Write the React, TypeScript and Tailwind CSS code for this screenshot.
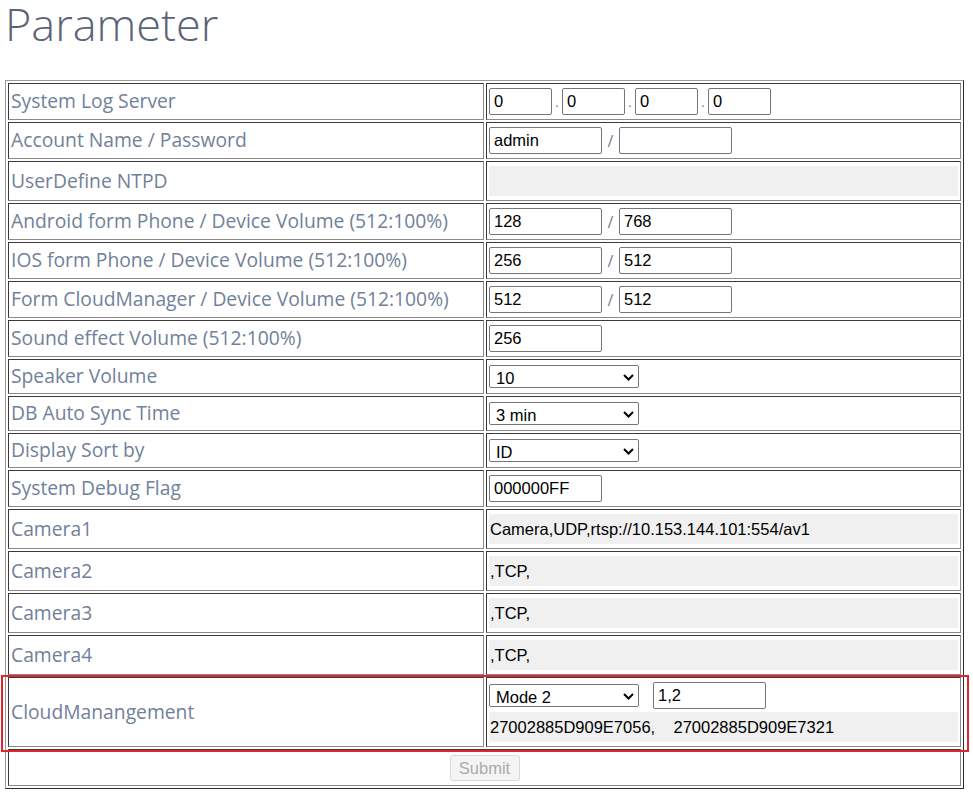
import { ChangeEvent } from "react";

const label = "font-['Open_Sans',sans-serif] text-[19.3px] text-[#71819a] align-middle p-[2px] border border-t-[#3a3a3a] border-l-[#3a3a3a] border-r-[#8a8a8a] border-b-[#8a8a8a]";
const value = "font-['Liberation_Sans',Arial,sans-serif] text-[16.5px] text-black align-middle p-[2px] border border-t-[#3a3a3a] border-l-[#3a3a3a] border-r-[#8a8a8a] border-b-[#8a8a8a]";
const input = "h-[27px] border border-[#767676] rounded-[2px] pl-[4px] bg-white text-[16.5px] text-black outline-none font-['Liberation_Sans',Arial,sans-serif]";

function noop(_e: ChangeEvent<HTMLInputElement | HTMLSelectElement>) {}

function Select({ val, options }: { val: string; options: string[] }) {
    return (
        <div className="relative w-[150px] h-[23px]">
            <select value={val} onChange={noop} className="appearance-none w-full h-full border border-[#767676] rounded-[2px] bg-white pl-[6px] text-[16.5px] text-black outline-none font-['Liberation_Sans',Arial,sans-serif]">
                {options.map((o) => (
                    <option key={o}>{o}</option>
                ))}
            </select>
            <svg className="absolute right-[5px] top-[9px] pointer-events-none" width="11" height="7" viewBox="0 0 11 7">
                <path d="M1 1l4.5 4.5L10 1" fill="none" stroke="#000" strokeWidth="2" />
            </svg>
        </div>
    );
}

function Gray({ children }: { children?: React.ReactNode }) {
    return <div className="bg-[#f0f0f0] h-[30px] flex items-center pl-[1px] whitespace-pre">{children}</div>;
}

function Slash() {
    return <span className="w-[17px] text-center text-[16px] text-[#71819a] font-['Open_Sans',sans-serif]">/</span>;
}

function Dot() {
    return <span className="w-[10px] self-end mb-[6px] text-center text-[14px] leading-none text-[#71819a]">.</span>;
}

function Pair({ a, b }: { a: string; b: string }) {
    return (
        <div className="flex items-center">
            <input value={a} onChange={noop} className={`${input} w-[113px]`} />
            <Slash />
            <input value={b} onChange={noop} className={`${input} w-[113px]`} />
        </div>
    );
}

export default function App() {
    return (
        <div className="relative min-h-screen bg-white">
            <h1 className="ml-[5px] h-[48px] text-[45px] leading-[48px] font-light text-[#5a6476] font-['Open_Sans',sans-serif]">Parameter</h1>

            <table className="mt-[32px] ml-[5px] w-[959px] table-fixed border-separate border-spacing-[2px] border border-t-[#9a9a9a] border-l-[#9a9a9a] border-r-[#2b2b2b] border-b-[#2b2b2b]">
                <tbody>
                    <tr>
                        <td className={`${label} w-[476px] h-[37px]`}>System Log Server</td>
                        <td className={`${value} w-[475px]`}>
                            <div className="flex items-center">
                                <input value="0" onChange={noop} className={`${input} w-[63px]`} />
                                <Dot />
                                <input value="0" onChange={noop} className={`${input} w-[63px]`} />
                                <Dot />
                                <input value="0" onChange={noop} className={`${input} w-[63px]`} />
                                <Dot />
                                <input value="0" onChange={noop} className={`${input} w-[63px]`} />
                            </div>
                        </td>
                    </tr>
                    <tr>
                        <td className={`${label} h-[37px]`}>Account Name / Password</td>
                        <td className={value}>
                            <Pair a="admin" b="" />
                        </td>
                    </tr>
                    <tr>
                        <td className={`${label} h-[40px]`}>UserDefine NTPD</td>
                        <td className={value}>
                            <Gray />
                        </td>
                    </tr>
                    <tr>
                        <td className={`${label} h-[37px]`}>Android form Phone / Device Volume (512:100%)</td>
                        <td className={value}>
                            <Pair a="128" b="768" />
                        </td>
                    </tr>
                    <tr>
                        <td className={`${label} h-[37px]`}>IOS form Phone / Device Volume (512:100%)</td>
                        <td className={value}>
                            <Pair a="256" b="512" />
                        </td>
                    </tr>
                    <tr>
                        <td className={`${label} h-[37px]`}>Form CloudManager / Device Volume (512:100%)</td>
                        <td className={value}>
                            <Pair a="512" b="512" />
                        </td>
                    </tr>
                    <tr>
                        <td className={`${label} h-[37px]`}>Sound effect Volume (512:100%)</td>
                        <td className={value}>
                            <input value="256" onChange={noop} className={`${input} w-[113px]`} />
                        </td>
                    </tr>
                    <tr>
                        <td className={`${label} h-[35px]`}>Speaker Volume</td>
                        <td className={value}>
                            <Select val="10" options={["10"]} />
                        </td>
                    </tr>
                    <tr>
                        <td className={`${label} h-[35px]`}>DB Auto Sync Time</td>
                        <td className={value}>
                            <Select val="3 min" options={["3 min"]} />
                        </td>
                    </tr>
                    <tr>
                        <td className={`${label} h-[35px]`}>Display Sort by</td>
                        <td className={value}>
                            <Select val="ID" options={["ID"]} />
                        </td>
                    </tr>
                    <tr>
                        <td className={`${label} h-[37px]`}>System Debug Flag</td>
                        <td className={value}>
                            <input value="000000FF" onChange={noop} className={`${input} w-[113px]`} />
                        </td>
                    </tr>
                    <tr>
                        <td className={`${label} h-[40px]`}>Camera1</td>
                        <td className={value}>
                            <Gray>Camera,UDP,rtsp://10.153.144.101:554/av1</Gray>
                        </td>
                    </tr>
                    <tr>
                        <td className={`${label} h-[40px]`}>Camera2</td>
                        <td className={value}>
                            <Gray>,TCP,</Gray>
                        </td>
                    </tr>
                    <tr>
                        <td className={`${label} h-[40px]`}>Camera3</td>
                        <td className={value}>
                            <Gray>,TCP,</Gray>
                        </td>
                    </tr>
                    <tr>
                        <td className={`${label} h-[40px]`}>Camera4</td>
                        <td className={value}>
                            <Gray>,TCP,</Gray>
                        </td>
                    </tr>
                    <tr>
                        <td className={`${label} h-[70px]`}>CloudManangement</td>
                        <td className={value}>
                            <div className="flex items-center gap-[14px]">
                                <Select val="Mode 2" options={["Mode 1", "Mode 2"]} />
                                <input value="1,2" onChange={noop} className={`${input} w-[113px]`} />
                            </div>
                            <div className="mt-[3px]">
                                <Gray>{"27002885D909E7056,    27002885D909E7321"}</Gray>
                            </div>
                        </td>
                    </tr>
                    <tr>
                        <td colSpan={2} className={`${value} h-[37px]`}>
                            <button disabled className="mx-auto block w-[70px] h-[26px] border border-[#dadada] rounded-[3px] bg-[#f4f4f4] text-[#ababab] text-[16.5px] font-['Liberation_Sans',Arial,sans-serif]">
                                Submit
                            </button>
                        </td>
                    </tr>
                </tbody>
            </table>

            <div className="absolute left-[1px] top-[675px] w-[968px] h-[77px] border-2 border-[#e3252b] pointer-events-none"></div>
        </div>
    );
}
